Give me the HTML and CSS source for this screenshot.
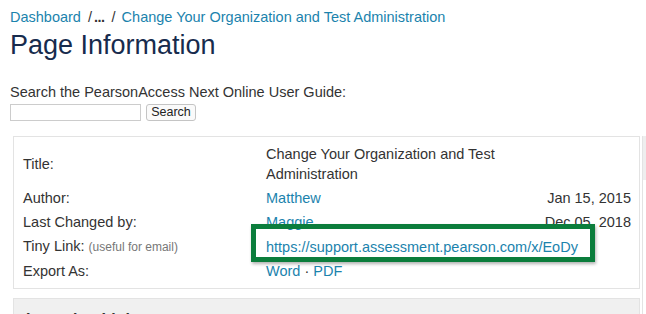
FILE: index.html
```html
<!DOCTYPE html>
<html lang="en">

<head>
    <meta charset="UTF-8">
    <meta name="viewport" content="width=device-width, initial-scale=1.0">
    <title>Page Information</title>
    <link rel="stylesheet" href="styles.css">
</head>

<body>
    <div class="breadcrumbs"><a href="#">Dashboard</a><span class="sep">/</span><span class="ellipsis">...</span><span class="sep sep-last">/</span><a href="#">Change Your Organization and Test Administration</a></div>
    <h1>Page Information</h1>

    <form class="search" action="#">
        <label for="q">Search the PearsonAccess Next Online User Guide:</label>
        <div class="search-row">
            <input type="text" id="q" name="q">
            <button type="button">Search</button>
        </div>
    </form>

    <div class="content">
        <div class="main">
            <div class="panel info">
                <table>
                    <colgroup>
                        <col class="col-label">
                        <col>
                        <col class="col-date">
                    </colgroup>
                    <tr>
                        <td class="label">Title:</td>
                        <td class="value">Change Your Organization and Test<br>Administration</td>
                        <td class="date"></td>
                    </tr>
                    <tr>
                        <td class="label">Author:</td>
                        <td class="value"><a href="#">Matthew</a></td>
                        <td class="date">Jan 15, 2015</td>
                    </tr>
                    <tr>
                        <td class="label">Last Changed by:</td>
                        <td class="value"><a href="#">Maggie</a></td>
                        <td class="date">Dec 05, 2018</td>
                    </tr>
                    <tr>
                        <td class="label">Tiny Link: <span class="hint">(useful for email)</span></td>
                        <td class="value"><a href="#">https://support.assessment.pearson.com/x/EoDy</a></td>
                        <td class="date"></td>
                    </tr>
                    <tr>
                        <td class="label">Export As:</td>
                        <td class="value"><a href="#">Word</a> · <a href="#">PDF</a></td>
                        <td class="date"></td>
                    </tr>
                </table>
                <div class="highlight"></div>
            </div>

            <div class="panel links">
                <h3>Incoming Links</h3>
            </div>
        </div>
        <div class="sidebar">
            <div class="sidebar-head"></div>
        </div>
    </div>
</body>

</html>
```

FILE: styles.css
```css
body {
    margin: 0;
    padding: 7px 0 0 10px;
    font-family: "Liberation Sans", Arial, sans-serif;
    font-size: 14.5px;
    color: #333;
    background-color: #fff;
    overflow: hidden;
}

a {
    color: #1b83ad;
    text-decoration: none;
}

.breadcrumbs {
    line-height: 20px;
    height: 20px;
    white-space: nowrap;
}

.breadcrumbs .sep {
    color: #333;
    margin: 0 2px 0 7px;
}

.breadcrumbs .sep-last {
    margin: 0 6px 0 7px;
}

.breadcrumbs .ellipsis {
    color: #333;
    font-weight: bold;
    letter-spacing: -0.5px;
}

h1 {
    margin: 2px 0 0 0;
    font-size: 27px;
    font-weight: normal;
    line-height: 32px;
    color: #172b4d;
}

.search {
    margin-top: 21px;
}

.search label {
    display: block;
    line-height: 20px;
}

.search-row {
    display: flex;
    gap: 5px;
    margin-top: 2px;
}

.search-row input {
    width: 131px;
    height: 17px;
    box-sizing: border-box;
    border: 1px solid #ccc;
    padding: 0 3px;
    margin: 0;
}

.search-row button {
    width: 50px;
    height: 17px;
    box-sizing: border-box;
    border: 1px solid #c4c4c4;
    border-radius: 3px;
    background-color: #fafafa;
    font-family: "Liberation Sans", Arial, sans-serif;
    font-size: 12.5px;
    color: #222;
    padding: 0;
    margin: 0;
    line-height: 15px;
}

.content {
    display: flex;
    gap: 2px;
    margin: 15px 0 0 3px;
}

.main {
    width: 627px;
    flex: none;
    display: flex;
    flex-direction: column;
    gap: 9px;
}

.panel {
    border: 1px solid #e3e3e3;
}

.info {
    position: relative;
    padding: 5px 8px 5px 9px;
}

.info table {
    width: 100%;
    border-collapse: collapse;
    table-layout: fixed;
}

.col-label {
    width: 243px;
}

.col-date {
    width: 100px;
}

.info td {
    padding: 2px 0;
    line-height: 20px;
    vertical-align: middle;
    color: #333;
}

.info .value {
    white-space: nowrap;
}

.info .date {
    text-align: right;
    white-space: nowrap;
}

.hint {
    font-size: 12px;
    color: #777;
}

.highlight {
    position: absolute;
    left: 237px;
    top: 87px;
    width: 334px;
    height: 28px;
    border: 5px solid #0b7d3c;
    box-shadow: 1px 2px 3px rgba(0, 0, 0, 0.3);
    pointer-events: none;
}

.links {
    background-color: #f0f0f0;
    height: 40px;
    padding: 0 12px;
}

.links h3 {
    margin: 12px 0 0 0;
    font-size: 16px;
    font-weight: bold;
    color: #333;
}

.sidebar {
    flex: 1;
    border-left: 1px solid #e3e3e3;
    height: 200px;
}

.sidebar-head {
    height: 44px;
    background-color: #eee;
}
```
